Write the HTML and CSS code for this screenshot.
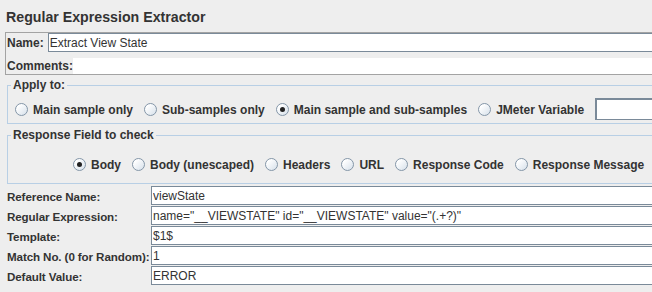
FILE: index.html
```html
<!DOCTYPE html>
<html lang="en">
<head>
  <meta charset="UTF-8">
  <title>Regular Expression Extractor</title>
  <link rel="stylesheet" href="styles.css">
</head>
<body>
  <div class="panel">
    <h1 class="title">Regular Expression Extractor</h1>

    <!-- name / comments box -->
    <div class="namebox">
      <div class="name-row">
        <label for="name">Name:</label>
        <input type="text" id="name" class="field" value="Extract View State">
      </div>
      <div class="comment-row">
        <label>Comments:</label>
        <div class="comment-field"></div>
      </div>
    </div>

    <fieldset class="group">
      <legend>Apply to:</legend>
      <div class="radio-row first">
        <label class="opt"><input type="radio" name="scope"> Main sample only</label>
        <label class="opt"><input type="radio" name="scope"> Sub-samples only</label>
        <label class="opt"><input type="radio" name="scope" checked> Main sample and sub-samples</label>
        <label class="opt"><input type="radio" name="scope"> JMeter Variable</label>
        <input type="text" class="field var-field">
      </div>
    </fieldset>

    <fieldset class="group second">
      <legend>Response Field to check</legend>
      <div class="radio-row centered">
        <label class="opt"><input type="radio" name="field" checked> Body</label>
        <label class="opt"><input type="radio" name="field"> Body (unescaped)</label>
        <label class="opt"><input type="radio" name="field"> Headers</label>
        <label class="opt"><input type="radio" name="field"> URL</label>
        <label class="opt"><input type="radio" name="field"> Response Code</label>
        <label class="opt"><input type="radio" name="field"> Response Message</label>
      </div>
    </fieldset>

    <div class="form">
      <label>Reference Name:</label>
      <input type="text" class="field" value="viewState">
      <label>Regular Expression:</label>
      <input type="text" class="field" value='name="__VIEWSTATE" id="__VIEWSTATE" value="(.+?)"'>
      <label>Template:</label>
      <input type="text" class="field" value="$1$">
      <label>Match No. (0 for Random):</label>
      <input type="text" class="field" value="1">
      <label>Default Value:</label>
      <input type="text" class="field" value="ERROR">
    </div>
  </div>
</body>
</html>
```

FILE: styles.css
```css
html, body {
  margin: 0;
  overflow: hidden;
}

body {
  background-color: #eeeeee;
  font-family: "Liberation Sans", Arial, sans-serif;
  font-size: 12px;
  color: #333333;
}

.panel {
  width: 720px;
}

.title {
  margin: 0;
  padding: 9px 0 0 6px;
  height: 17px;
  font-size: 14.2px;
  line-height: 17px;
  font-weight: bold;
}

label {
  font-weight: bold;
}

.field {
  box-sizing: border-box;
  height: 19px;
  margin: 0;
  padding: 0 1px;
  border: 1px solid #7a8a99;
  background: #ffffff;
  font-family: "Liberation Sans", Arial, sans-serif;
  font-size: 12px;
  color: #333333;
  outline: none;
}

/* Name / Comments */
.namebox {
  margin: 6px 0 0 5px;
  border: 1px solid #a3a3a3;
  border-right: none;
  padding-left: 1px;
}

.name-row {
  display: flex;
  align-items: center;
  gap: 4px;
}

.name-row .field {
  flex: 1;
}

.comment-row {
  display: flex;
  align-items: center;
  padding-top: 6px;
  height: 16px;
}

.comment-row label {
  line-height: 16px;
}

.comment-field {
  flex: 1;
  height: 16px;
  background: #ffffff;
}

/* Group boxes */
.group {
  margin: 3px 0 0 7px;
  padding: 0;
  border: 1px solid #b8cfe5;
  border-right: none;
  min-width: 0;
}

.group legend {
  margin-left: 3px;
  padding: 0 2px;
  font-weight: bold;
  line-height: 14px;
}

.group.second {
  margin-top: 4px;
}

.radio-row {
  display: flex;
  align-items: center;
  gap: 11px;
  white-space: nowrap;
}

.radio-row.first {
  height: 22px;
  padding: 6px 0 3px 7px;
}

.radio-row.centered {
  height: 20px;
  padding: 12px 0 9px 65px;
}

.opt {
  display: flex;
  align-items: center;
  padding-top: 1px;
}

.opt input {
  appearance: none;
  -webkit-appearance: none;
  box-sizing: border-box;
  width: 13px;
  height: 13px;
  margin: 0 5px 0 0;
  border: 1px solid #8496a8;
  border-radius: 50%;
  background: linear-gradient(135deg, #ffffff 20%, #d6e0ea 100%);
  position: relative;
}

.opt input:checked::after {
  content: "";
  position: absolute;
  left: 3px;
  top: 3px;
  width: 5px;
  height: 5px;
  border-radius: 50%;
  background: #222222;
}

.var-field {
  flex: 1;
  height: 22px;
  border-width: 2px 1px 1px 2px;
}

/* Extractor fields */
.form {
  display: grid;
  grid-template-columns: 144px 1fr;
  grid-auto-rows: 19px;
  row-gap: 1px;
  margin-top: 2px;
  padding-left: 7px;
}

.form label {
  height: 19px;
  line-height: 21px;
  white-space: nowrap;
  font-size: 11.6px;
  letter-spacing: -0.1px;
}
```
